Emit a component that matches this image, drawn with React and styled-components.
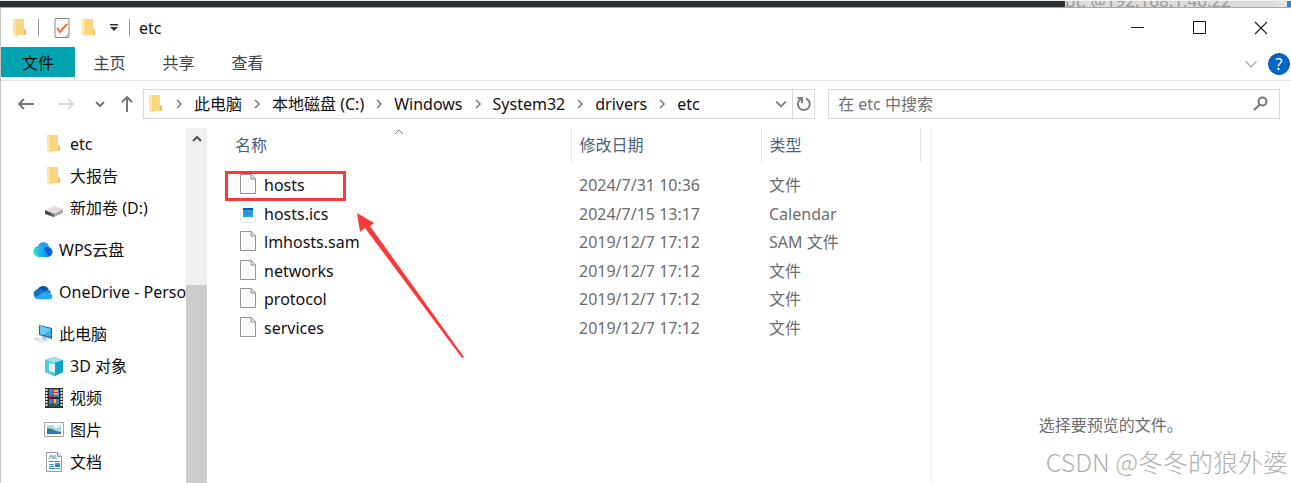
import React, { useState } from 'react';
import styled, { createGlobalStyle } from 'styled-components';

const quickLinks = [
  { name: 'etc', icon: 'folder', level: 2 },
  { name: '大报告', icon: 'folder', level: 2 },
  { name: '新加卷 (D:)', icon: 'drive', level: 2 },
];

const sideGroups = [
  quickLinks,
  [{ name: 'WPS云盘', icon: 'wps', level: 1 }],
  [{ name: 'OneDrive - Personal', icon: 'onedrive', level: 1 }],
  [
    { name: '此电脑', icon: 'computer', level: 1 },
    { name: '3D 对象', icon: 'cube', level: 2 },
    { name: '视频', icon: 'video', level: 2 },
    { name: '图片', icon: 'picture', level: 2 },
    { name: '文档', icon: 'document', level: 2 },
  ],
];

const files = [
  { name: 'hosts', date: '2024/7/31 10:36', type: '文件', marked: true },
  { name: 'hosts.ics', date: '2024/7/15 13:17', type: 'Calendar', calendar: true },
  { name: 'lmhosts.sam', date: '2019/12/7 17:12', type: 'SAM 文件' },
  { name: 'networks', date: '2019/12/7 17:12', type: '文件' },
  { name: 'protocol', date: '2019/12/7 17:12', type: '文件' },
  { name: 'services', date: '2019/12/7 17:12', type: '文件' },
];

const path = ['此电脑', '本地磁盘 (C:)', 'Windows', 'System32', 'drivers', 'etc'];

const FolderIcon = () => (
  <svg width="14" height="20" viewBox="0 0 14 20" aria-hidden="true">
    <path d="M0 1h11v10l2 1v5H0z" fill="#fad77c" />
    <path d="M11 11l2 1v5h-2z" fill="#edc263" />
    <path d="M0 1l4 2v16l-4-2z" fill="#fde6a4" />
    <path d="M4 3v15" stroke="#f3ca68" />
  </svg>
);

const Chevron = ({ dir = 'right', size = 10, color = '#777', weight = 1.5 }) => {
  const shapes = {
    right: 'M3 1l4 4-4 4',
    down: 'M1 3l4 4 4-4',
    up: 'M1 7l4-4 4 4',
  };
  return (
    <svg width={size} height={size} viewBox="0 0 10 10" aria-hidden="true">
      <path
        d={shapes[dir]}
        fill="none"
        stroke={color}
        strokeWidth={weight}
        vectorEffect="non-scaling-stroke"
      />
    </svg>
  );
};

const Arrow = ({ dir, color }) => {
  const shapes = {
    left: 'M16 8H1M6 3L1 8l5 5',
    right: 'M0 8h15M10 3l5 5-5 5',
    up: 'M8 16V1M3 6l5-5 5 5',
  };
  return (
    <svg width="16" height="16" viewBox="0 0 16 16" aria-hidden="true">
      <path d={shapes[dir]} fill="none" stroke={color} strokeWidth="2" />
    </svg>
  );
};

const sideIcons = {
  folder: <FolderIcon />,
  drive: (
    <svg width="20" height="20" viewBox="0 0 20 20" aria-hidden="true">
      <path d="M1 12l9-4 9 3-9 5z" fill="#dedede" />
      <path d="M1 12l9 4v3l-9-3z" fill="#4a4a4a" />
      <path d="M10 16l9-5v4l-9 4z" fill="#a9a9a9" />
      <path d="M7 16l2 1" stroke="#6be06b" />
    </svg>
  ),
  wps: (
    <svg width="20" height="20" viewBox="0 0 20 20" aria-hidden="true">
      <defs>
        <linearGradient id="wps" x1="0" x2="1">
          <stop offset="0" stopColor="#35e5c6" />
          <stop offset="0.6" stopColor="#19a9ee" />
          <stop offset="1" stopColor="#1a7cf5" />
        </linearGradient>
      </defs>
      <circle cx="10.500" cy="7.500" r="5.500" fill="#2b9df4" />
      <circle cx="14.500" cy="12" r="5" fill="#0b62e0" />
      <path d="M6 17a5.500 5.500 0 1 1 3-10c3 1 5 7 7 10z" fill="url(#wps)" />
    </svg>
  ),
  onedrive: (
    <svg width="20" height="20" viewBox="0 0 22 20" aria-hidden="true">
      <path d="M5 8a6.500 6.500 0 0 1 12-1l1 4H5z" fill="#0a4fa8" />
      <path d="M4 17a5 5 0 0 1-1-9c2-2 6-2 8 0l5 4-6 5z" fill="#1273cf" />
      <path d="M12 10c2-3 7-3 8 0l-4 3z" fill="#1490df" />
      <path d="M12 10l5 1c5 0 6 7 1 7H6c-2 0-3-1-4-2z" fill="#28a8ea" />
    </svg>
  ),
  computer: (
    <svg width="20" height="20" viewBox="0 0 20 20" aria-hidden="true">
      <path d="M6 1l13 3v11L6 11z" fill="#286b9b" />
      <path d="M7 2l11 3v8L7 10z" fill="#38aef3" />
      <path d="M7 2l11 3-8 6-3-1z" fill="#6ccafa" />
      <path d="M9 12l5 2v2l-5-2z" fill="#a6b4bf" />
      <path d="M0 15l4-2 11 3-5 3z" fill="#cfd6dc" />
      <path d="M3 15l8 3M5 14l8 3" stroke="#f6f8fa" />
    </svg>
  ),
  cube: (
    <svg width="20" height="20" viewBox="0 0 20 20" aria-hidden="true">
      <path d="M1 4l9-3 9 3v12l-9 4-9-4z" fill="#26b2cd" />
      <path d="M1 4l9-3 9 3-9 3z" fill="#95e5ee" />
      <path d="M11 7l8-3v12l-8 4z" fill="#0ea3bf" />
      <path d="M1 4l10 3v13l-10-4z" fill="#54c9da" />
      <path d="M5 7l6 1v9l-6-2z" fill="#d4f4f7" />
    </svg>
  ),
  video: (
    <svg width="20" height="20" viewBox="0 0 20 20" aria-hidden="true">
      <path d="M1 0h18v20H1z" fill="#2c2c2c" />
      <path d="M5 1h10v8H5zM5 11h10v8H5z" fill="#3f78d8" />
      <path d="M2.500 1v18M17.500 1v18" stroke="#eee" strokeWidth="2" strokeDasharray="2 1" />
      <path d="M10 2h4v5h-4z" fill="#e8c629" />
      <path d="M10 4h4v1h-4zM6 7h4v2H6z" fill="#c43636" />
      <path d="M5 17l4-2 3 2 3-1v3H5z" fill="#245c46" />
      <path d="M8 11h5l-1 4H9z" fill="#d9452c" />
      <path d="M10 11h2v4h-2z" fill="#e8c629" />
    </svg>
  ),
  picture: (
    <svg width="20" height="20" viewBox="0 0 20 20" aria-hidden="true">
      <path d="M.500 2.500h19v14H.5z" fill="#fff" stroke="#a5a5a5" />
      <path d="M3 5h14v9H3z" fill="#a8d8f2" />
      <path d="M3 8l5 1 4 2 5 1v2H3z" fill="#3e7d62" />
      <path d="M3 12h14v2H3z" fill="#2f78b4" />
      <path d="M8 6l5-1 3 2-4 1z" fill="#fff" />
    </svg>
  ),
  document: (
    <svg width="20" height="20" viewBox="0 0 20 20" aria-hidden="true">
      <path d="M2.500.5h11l4 4v15h-15z" fill="#fff" stroke="#9a9a9a" />
      <path d="M13.500.5v4h4" fill="#ddd" stroke="#9a9a9a" />
      <path d="M5 7l2-4 2 4M9 4h3M9 6h4M5 9.500h11M5 12.500h5M5 14.500h5M5 16.500h11" fill="none" stroke="#3c8fcc" />
      <path d="M11 11h5v4h-5z" fill="#4a9bd4" />
      <path d="M11 13h5v2h-5z" fill="#4b7a58" />
    </svg>
  ),
};

const FileIcon = ({ calendar }) =>
  calendar ? (
    <svg width="16" height="22" viewBox="0 0 16 22" aria-hidden="true">
      <path d="M.5.500h11l4 4v15H.5z" fill="#f7f8f9" stroke="#eceef0" />
      <path d="M3 5h10v9H3z" fill="#2e9bea" />
      <path d="M3 5h10v2H3z" fill="#0c59a4" />
      <path d="M5 9.500h6M5 11.500h5" stroke="#1477c9" strokeDasharray="1 1" />
    </svg>
  ) : (
    <svg width="16" height="22" viewBox="0 0 16 22" aria-hidden="true">
      <path d="M.5.500h11l4 4v15H.5z" fill="#fafafa" stroke="#929292" />
      <path d="M11 .5v4.500h4.500" fill="#e2e2e2" stroke="#929292" />
    </svg>
  );

const App = () => {
  const [query, setQuery] = useState('');

  return (
    <>
      <GlobalStyle />
      <Desktop>
        <Backdrop>
          <BackdropText>pt. @192.168.1.40.22</BackdropText>
          <BackdropAccent />
        </Backdrop>
        <Window>
          <TitleBar>
            <TitleIcon><FolderIcon /></TitleIcon>
            <Divider />
            <QuickButton aria-label="属性">
              <svg width="16" height="20" viewBox="0 0 16 20" aria-hidden="true">
                <path d="M1 .5h14v19H1z" fill="#f7f7f9" stroke="#8b8b8b" />
                <path d="M11 19.500l4-4" stroke="#8b8b8b" />
                <path d="M3 10l3 4 7-8" fill="none" stroke="#ee7240" strokeWidth="2" />
              </svg>
            </QuickButton>
            <QuickButton aria-label="新建文件夹"><FolderIcon /></QuickButton>
            <QuickButton aria-label="自定义快速访问工具栏" $small>
              <svg width="8" height="8" viewBox="0 0 8 8" aria-hidden="true">
                <path d="M0 0h8v1.500H0zM0 3h8L4 7z" fill="#333" />
              </svg>
            </QuickButton>
            <Divider />
            <Title>etc</Title>
            <CaptionButton aria-label="最小化">
              <svg width="14" height="14" viewBox="0 0 14 14" aria-hidden="true">
                <path d="M0 6.500h13" stroke="#222" />
              </svg>
            </CaptionButton>
            <CaptionButton aria-label="最大化">
              <svg width="14" height="14" viewBox="0 0 14 14" aria-hidden="true">
                <path d="M.5.500h12v12H.5z" fill="none" stroke="#111" />
              </svg>
            </CaptionButton>
            <CaptionButton aria-label="关闭">
              <svg width="14" height="14" viewBox="0 0 14 14" aria-hidden="true">
                <path d="M1 1l12 12M13 1L1 13" stroke="#222" strokeWidth="1.200" />
              </svg>
            </CaptionButton>
          </TitleBar>

          <Ribbon aria-label="功能区">
            <Tab $file>文件</Tab>
            <Tab>主页</Tab>
            <Tab>共享</Tab>
            <Tab>查看</Tab>
            <RibbonTools>
              <IconButton aria-label="展开功能区">
                <Chevron dir="down" size={14} color="#b0b0b0" />
              </IconButton>
              <HelpButton aria-label="帮助">?</HelpButton>
            </RibbonTools>
          </Ribbon>

          <Toolbar>
            <NavButton aria-label="后退"><Arrow dir="left" color="#777" /></NavButton>
            <NavButton aria-label="前进"><Arrow dir="right" color="#dadada" /></NavButton>
            <NavButton aria-label="最近浏览的位置" $small><Chevron dir="down" weight={2} /></NavButton>
            <NavButton aria-label="上移" $small><Arrow dir="up" color="#777" /></NavButton>
            <Address>
              <AddressIcon><FolderIcon /></AddressIcon>
              <Crumbs>
                {path.map(part => (
                  <Crumb key={part}>
                    <CrumbMark><Chevron /></CrumbMark>
                    <CrumbLink href="#">{part}</CrumbLink>
                  </Crumb>
                ))}
              </Crumbs>
              <IconButton aria-label="历史记录">
                <Chevron dir="down" size={12} color="#808080" weight={2} />
              </IconButton>
              <RefreshButton aria-label="刷新">
                <svg width="16" height="18" viewBox="0 0 16 18" aria-hidden="true">
                  <path d="M10 3.500a6 6 0 1 1-5 .3" fill="none" stroke="#808080" strokeWidth="2" />
                  <path d="M1.500 3H6v5" fill="none" stroke="#808080" strokeWidth="2" />
                </svg>
              </RefreshButton>
            </Address>
            <Search>
              <SearchInput
                aria-label="搜索"
                placeholder="在 etc 中搜索"
                value={query}
                onChange={e => setQuery(e.target.value)}
              />
              <svg width="15" height="15" viewBox="0 0 15 15" aria-hidden="true">
                <circle cx="9.500" cy="5.500" r="4" fill="none" stroke="#777" strokeWidth="2" />
                <path d="M7 8.500L1 14" stroke="#777" strokeWidth="2.200" />
              </svg>
            </Search>
          </Toolbar>

          <Body>
            <Sidebar aria-label="导航窗格">
              {sideGroups.map(group => (
                <SideGroup key={group[0].name}>
                  {group.map(item => (
                    <li key={item.name}>
                      <SideLink href="#" $level={item.level}>
                        <SideIcon>{sideIcons[item.icon]}</SideIcon>
                        {item.name}
                      </SideLink>
                    </li>
                  ))}
                </SideGroup>
              ))}
            </Sidebar>
            <ScrollTrack>
              <ScrollButton aria-label="向上滚动">
                <Chevron dir="up" color="#555" weight={2} />
              </ScrollButton>
              <ScrollThumb />
            </ScrollTrack>

            <FilePane>
              <FileTable>
                <colgroup>
                  <col width="362" />
                  <col width="190" />
                  <col width="159" />
                </colgroup>
                <thead>
                  <tr>
                    <Heading $first>
                      名称
                      <SortMark><Chevron dir="up" weight={1} /></SortMark>
                    </Heading>
                    <Heading>修改日期</Heading>
                    <Heading>类型</Heading>
                  </tr>
                </thead>
                <FileRows>
                  {files.map(file => (
                    <tr key={file.name}>
                      <Cell $first>
                        <FileName>
                          <FileIcon calendar={file.calendar} />
                          {file.name}
                        </FileName>
                        {file.marked && <Highlight />}
                      </Cell>
                      <Cell>{file.date}</Cell>
                      <Cell>{file.type}</Cell>
                    </tr>
                  ))}
                </FileRows>
              </FileTable>
              <Pointer width="108" height="146" viewBox="0 0 108 146" aria-hidden="true">
                <path d="M0 0l17 10-4 3 94 131-2 1L8 15l-5 4z" fill="#fb3a38" />
              </Pointer>
            </FilePane>

            <Preview>选择要预览的文件。</Preview>
          </Body>
        </Window>
        <Watermark>CSDN @冬冬的狼外婆</Watermark>
      </Desktop>
    </>
  );
};

export default App;

const GlobalStyle = createGlobalStyle`
  * {
    box-sizing: border-box;
  }

  body {
    margin: 0;
    background-color: white;
    color: #111;
    font-family: 'Noto Sans', 'Noto Sans CJK SC', sans-serif;
    font-size: 16px;
    line-height: 24px;
  }

  button,
  input {
    margin: 0;
    padding: 0;
    border: 0;
    background: none;
    color: inherit;
    font: inherit;
  }

  a {
    color: inherit;
    text-decoration: none;
  }

  ul,
  ol {
    margin: 0;
    padding: 0;
    list-style: none;
  }

  svg {
    display: block;
    flex-shrink: 0;
  }
`;

const Desktop = styled.div`
  position: relative;
  display: flex;
  flex-direction: column;
  height: 100vh;
  overflow: hidden;
`;

const Backdrop = styled.div`
  display: flex;
  justify-content: flex-end;
  flex: 0 0 8px;
  overflow: hidden;
  border-top: 1px solid #f2f2f2;
  border-bottom: 1px solid #a8a8a8;
  background-color: #2b2f33;
`;

const BackdropText = styled.div`
  width: 210px;
  height: 6px;
  background-color: #dcdcdc;
  color: #999;
  font-size: 17px;
  line-height: 0px;
  white-space: nowrap;
`;

const BackdropAccent = styled.div`
  width: 16px;
  border-right: 4px solid #1e88e5;
  background-color: #e2e2e2;
`;

const Window = styled.main`
  display: flex;
  flex-direction: column;
  flex: 1;
  min-height: 0;
  border-left: 1px solid #c4c4c4;
`;

const TitleBar = styled.header`
  display: flex;
  align-items: center;
  height: 39px;
`;

const TitleIcon = styled.span`
  display: flex;
  justify-content: center;
  width: 37px;
`;

const Divider = styled.span`
  width: 1px;
  height: 17px;
  margin-right: 9px;
  background-color: #999;
`;

const QuickButton = styled.button`
  display: flex;
  align-items: center;
  justify-content: center;
  width: ${props => (props.$small ? '24px' : '27px')};
  height: 28px;
  margin-right: ${props => (props.$small ? '3px' : '0')};
`;

const Title = styled.span`
  flex: 1;
`;

const CaptionButton = styled.button`
  display: flex;
  align-items: center;
  justify-content: center;
  width: 62px;
  height: 39px;

  &:last-child {
    width: 60px;
  }
`;

const Ribbon = styled.nav`
  display: flex;
  height: 34px;
  border-bottom: 1px solid #e3e3e3;
`;

const Tab = styled.button`
  width: ${props => (props.$file ? '74px' : '69px')};
  height: 30px;
  padding-top: 2px;
  background-color: ${props => (props.$file ? '#00a4b0' : 'transparent')};
  color: ${props => (props.$file ? '#111' : '#444')};
`;

const RibbonTools = styled.div`
  display: flex;
  align-items: center;
  gap: 6px;
  height: 33px;
  margin-left: auto;
  padding-right: 1px;
`;

const IconButton = styled.button`
  display: flex;
  align-items: center;
  justify-content: center;
  width: 22px;
  height: 22px;
`;

const HelpButton = styled.button`
  width: 22px;
  height: 22px;
  border: 1px solid #0a559e;
  border-radius: 50%;
  background-color: #0067c9;
  color: white;
  line-height: 20px;
`;

const Toolbar = styled.div`
  display: flex;
  align-items: center;
  height: 47px;
  padding: 0 11px 2px 5px;
`;

const NavButton = styled.button`
  display: flex;
  align-items: center;
  justify-content: center;
  width: ${props => (props.$small ? '27px' : '40px')};
  height: 28px;
`;

const Address = styled.div`
  display: flex;
  align-items: center;
  flex: 1;
  min-width: 0;
  height: 30px;
  margin: 0 13px 0 3px;
  border: 1px solid #d9d9d9;
`;

const AddressIcon = styled.span`
  padding: 0 1px 0 5px;
`;

const Crumbs = styled.ol`
  display: flex;
  flex: 1;
  overflow: hidden;
  white-space: nowrap;
`;

const Crumb = styled.li`
  display: flex;
  align-items: center;
`;

const CrumbMark = styled.span`
  display: flex;
  justify-content: center;
  width: 30px;
`;

const CrumbLink = styled.a`
  &:hover {
    background-color: #e5f3ff;
  }
`;

const RefreshButton = styled(IconButton)`
  height: 28px;
  border-left: 1px solid #d9d9d9;
`;

const Search = styled.div`
  display: flex;
  align-items: center;
  width: 35vw;
  height: 30px;
  padding: 0 11px 0 9px;
  border: 1px solid #d9d9d9;
`;

const SearchInput = styled.input`
  flex: 1;
  min-width: 0;
  outline: none;

  &::placeholder {
    color: #707070;
    opacity: 1;
  }
`;

const Body = styled.div`
  display: flex;
  flex: 1;
  min-height: 0;
`;

const Sidebar = styled.nav`
  display: flex;
  flex-direction: column;
  gap: 10px;
  width: 185px;
  overflow: hidden;
`;

const SideGroup = styled.ul`
  flex-shrink: 0;
`;

const SideLink = styled.a`
  display: flex;
  align-items: center;
  gap: 6px;
  height: 32px;
  padding-left: ${props => (props.$level === 2 ? '43px' : '32px')};
  white-space: nowrap;
`;

const SideIcon = styled.span`
  display: flex;
  justify-content: center;
  flex: 0 0 20px;
`;

const ScrollTrack = styled.div`
  display: flex;
  flex-direction: column;
  width: 21px;
  background-color: #f0f0f0;
`;

const ScrollButton = styled(IconButton)`
  width: 21px;
  flex: 0 0 22px;
`;

const ScrollThumb = styled.div`
  flex: 1;
  margin-top: 135px;
  background-color: #cdcdcd;
`;

const FilePane = styled.section`
  position: relative;
  flex: 1;
  min-width: 0;
  margin-left: 2px;
`;

const FileTable = styled.table`
  width: 711px;
  table-layout: fixed;
  border-collapse: collapse;
`;

const Heading = styled.th`
  position: relative;
  height: 34px;
  padding: 0 0 0 ${props => (props.$first ? '26px' : '8px')};
  border-right: 1px solid #e3e3e3;
  color: #4c607a;
  font-weight: 400;
  text-align: left;
`;

const SortMark = styled.span`
  position: absolute;
  top: -1px;
  left: calc(50% + 4px);
`;

const FileRows = styled.tbody`
  &::before {
    content: '';
    display: block;
    height: 9px;
  }

  tr {
    height: 28px;
  }

  tr:nth-child(even) {
    height: 29px;
  }
`;

const Cell = styled.td`
  position: relative;
  padding: 0 0 0 ${props => (props.$first ? '31px' : '8px')};
  color: ${props => (props.$first ? '#111' : '#6d6d6d')};
`;

const FileName = styled.span`
  display: flex;
  align-items: center;
  gap: 8px;
`;

const Highlight = styled.span`
  position: absolute;
  top: 0;
  left: 16px;
  width: 121px;
  height: 30px;
  border: 3px solid #fb3a38;
`;

const Pointer = styled.svg`
  position: absolute;
  top: 85px;
  left: 148px;
`;

const Preview = styled.aside`
  width: 28vw;
  padding-top: 285px;
  border-left: 1px solid #f0f0f0;
  color: #6d6d6d;
  text-align: center;
`;

const Watermark = styled.div`
  position: absolute;
  right: 3px;
  bottom: 4px;
  color: #b0b0b0;
  font-family: 'Noto Sans CJK SC', sans-serif;
  font-size: 25px;
  font-weight: 300;
  line-height: 36px;
  text-shadow: 1px 1px 1px white;
`;
